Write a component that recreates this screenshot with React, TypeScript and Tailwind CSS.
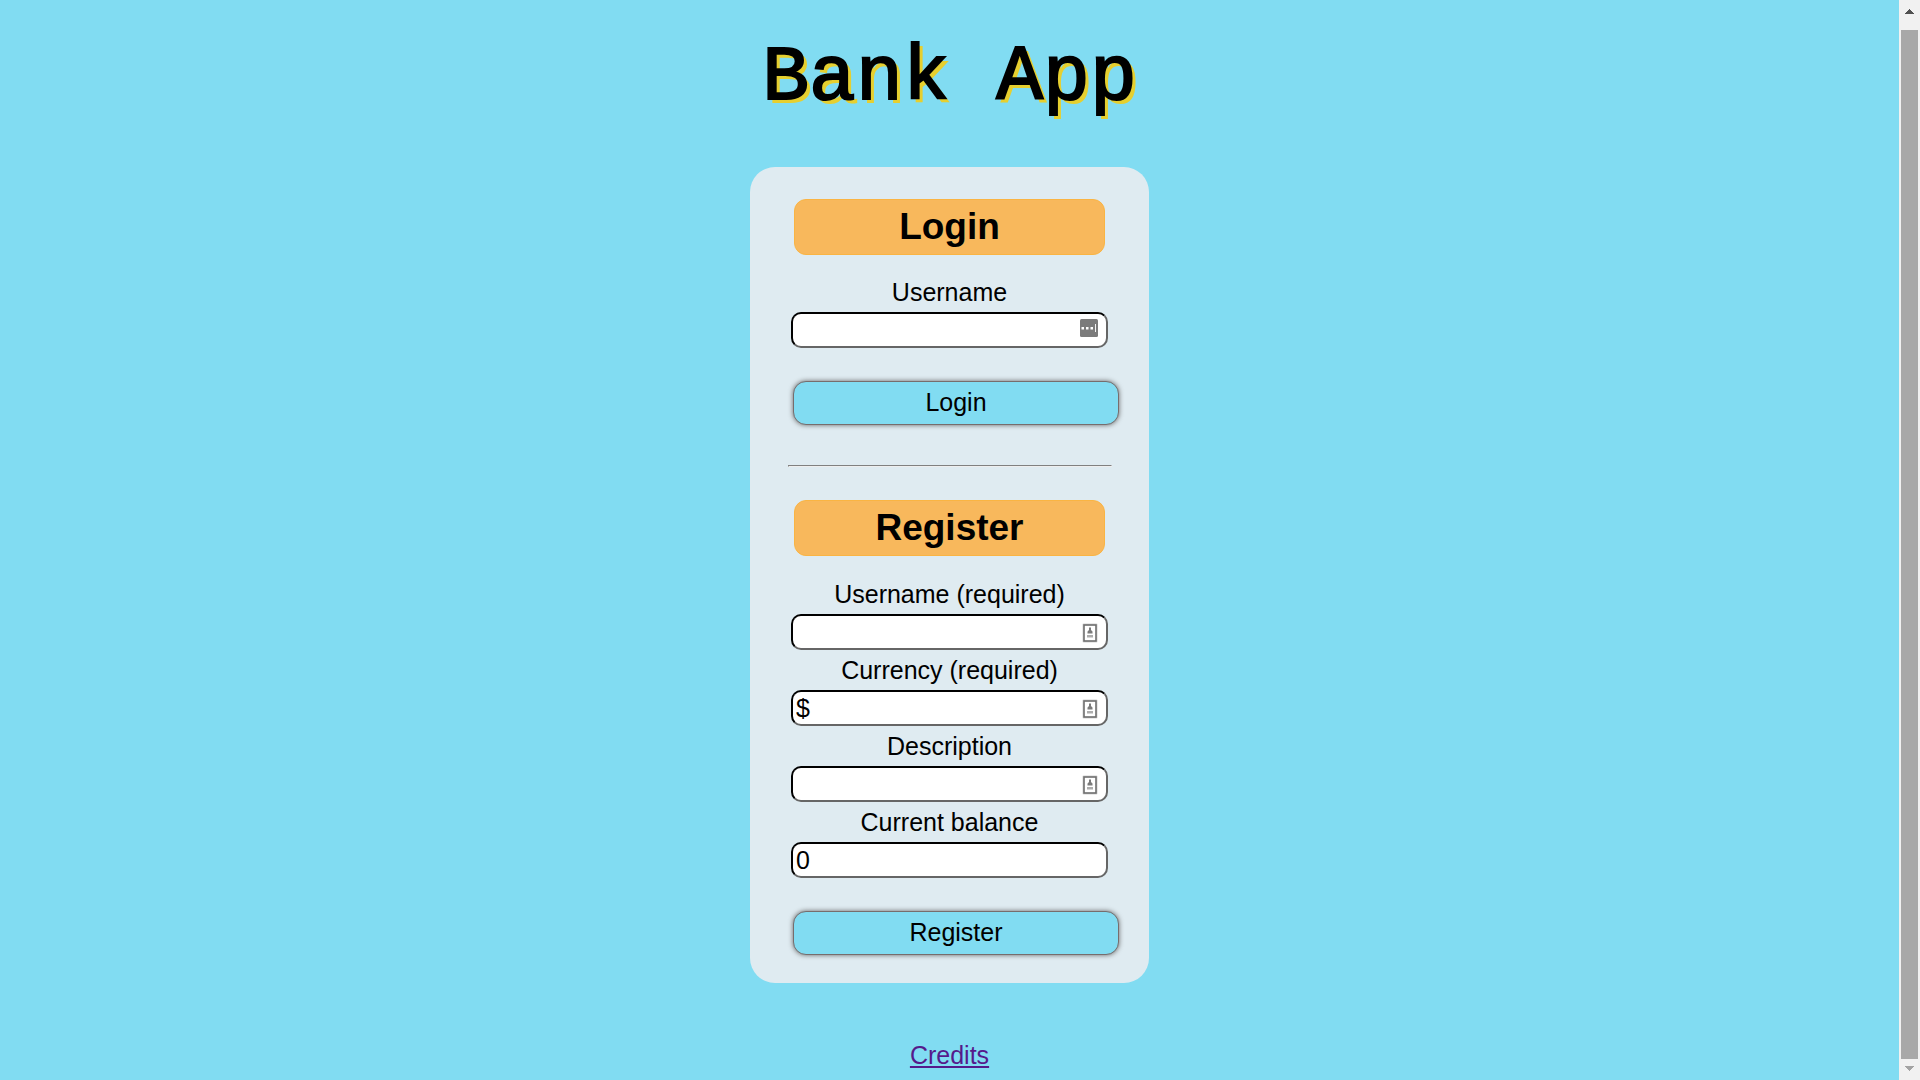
import type { ReactNode } from "react";

function PasswordIcon() {
  return (
    <svg width="18" height="18" viewBox="0 0 18 18" aria-hidden="true">
      <rect width="18" height="18" rx="1.5" fill="#7b7b7b" />
      <path d="M1.5 8h2.500v2.500H1.500zM6 8h2.500v2.500H6zM10.500 8h2.500v2.500h-2.500z" fill="#fff" />
      <path d="M15 5h1v8h-1z" fill="#f4f4f4" />
    </svg>
  );
}

function ContactIcon() {
  return (
    <svg width="16" height="20" viewBox="0 0 16 20" aria-hidden="true">
      <rect x="0.5" y="0.5" width="15" height="19" rx="1" fill="#d4d4d4" />
      <rect x="2" y="2" width="12" height="16" fill="#fff" stroke="#6f6f6f" strokeWidth="1.6" />
      <path d="M7 4.500h2v2.500l1.500 1.500V10.500H5.500V8.500L7 7z" fill="#7a7a7a" />
      <path d="M5 12h6v2.500H5z" fill="#adadad" />
    </svg>
  );
}

function Field({ id, label, value, icon }: { id: string; label: string; value?: string; icon?: ReactNode }) {
  return (
    <div className="mx-1">
      <label htmlFor={id} className="block h-10 text-center leading-10">
        {label}
      </label>
      <div className="relative">
        <input
          id={id}
          type="text"
          defaultValue={value}
          className="block h-9 w-full rounded-[10px] border-2 border-t-black border-r-[#666] border-b-[#666] border-l-black bg-white px-[3px] leading-8 outline-none"
        />
        {icon}
      </div>
    </div>
  );
}

function Heading({ children }: { children: ReactNode }) {
  return (
    <h2 className="mx-[7px] h-14 rounded-xl border border-[#fab443] bg-[#f8b85c] text-center text-[37px] leading-[54px] font-bold">
      {children}
    </h2>
  );
}

function SubmitButton({ children }: { children: ReactNode }) {
  return (
    <button
      type="button"
      className="mt-[33px] -mr-[7px] ml-[6px] h-11 rounded-[13px] border border-[#776d6d] bg-[#81dcf2] text-center shadow-[0_0_5px_#666]"
    >
      {children}
    </button>
  );
}

function Contact() {
  return (
    <span className="absolute top-[9px] right-[10px]">
      <ContactIcon />
    </span>
  );
}

function Scrollbar() {
  return (
    <div className="flex w-[21px] shrink-0 flex-col items-center bg-[#f1f1f1]">
      <button type="button" aria-label="Scroll up" className="flex h-[30px] w-full items-start justify-center pt-[9px]">
        <svg width="9" height="5" viewBox="0 0 9 5" shapeRendering="crispEdges">
          <path d="M4 0h1v1h1v1h1v1h1v1h1v1H0V4h1V3h1V2h1V1h1z" fill="#505050" />
        </svg>
      </button>
      <div className="w-[17px] grow bg-[#a8a8a8]" />
      <button type="button" aria-label="Scroll down" className="flex h-[21px] w-full items-start justify-center pt-[7px]">
        <svg width="9" height="5" viewBox="0 0 9 5" shapeRendering="crispEdges">
          <path d="M0 0h9v1H8v1H7v1H6v1H5v1H4V4H3V3H2V2H1V1H0z" fill="#a3a3a3" />
        </svg>
      </button>
    </div>
  );
}

export default function App() {
  return (
    <div className="flex h-screen overflow-hidden bg-[#81dcf2] font-['Liberation_Sans',Arial,sans-serif] text-[25px] text-black">
      <main className="flex grow flex-col items-center">
        <h1 className="mt-[34px] h-[88px] text-[78px] leading-[88px] font-normal whitespace-pre font-['Liberation_Mono',monospace] [-webkit-text-stroke:2px_currentColor] [text-shadow:4px_4px_#e6cf2f]">
          Bank App
        </h1>
        <div className="mt-[45px] w-[399px] max-w-full rounded-[25px] bg-[#dfebf1] px-[37px] pt-8 pb-7">
          <form className="flex flex-col">
            <Heading>Login</Heading>
            <div className="mt-[17px]">
              <Field
                id="login-user"
                label="Username"
                icon={
                  <span className="absolute top-[7px] right-[10px]">
                    <PasswordIcon />
                  </span>
                }
              />
            </div>
            <SubmitButton>Login</SubmitButton>
          </form>
          <hr className="mt-10 ml-px h-0.5 border border-t-[#808080] border-r-[#eeeeee] border-b-[#eeeeee] border-l-[#808080]" />
          <form className="mt-[33px] flex flex-col">
            <Heading>Register</Heading>
            <div className="mt-[18px]">
              <Field id="register-user" label="Username (required)" icon={<Contact />} />
              <Field id="currency" label="Currency (required)" value="$" icon={<Contact />} />
              <Field id="description" label="Description" icon={<Contact />} />
              <Field id="balance" label="Current balance" value="0" />
            </div>
            <SubmitButton>Register</SubmitButton>
          </form>
        </div>
        <a href="#credits" className="mt-[58px] leading-7 text-[#551a8b] underline">
          Credits
        </a>
      </main>
      <Scrollbar />
    </div>
  );
}
